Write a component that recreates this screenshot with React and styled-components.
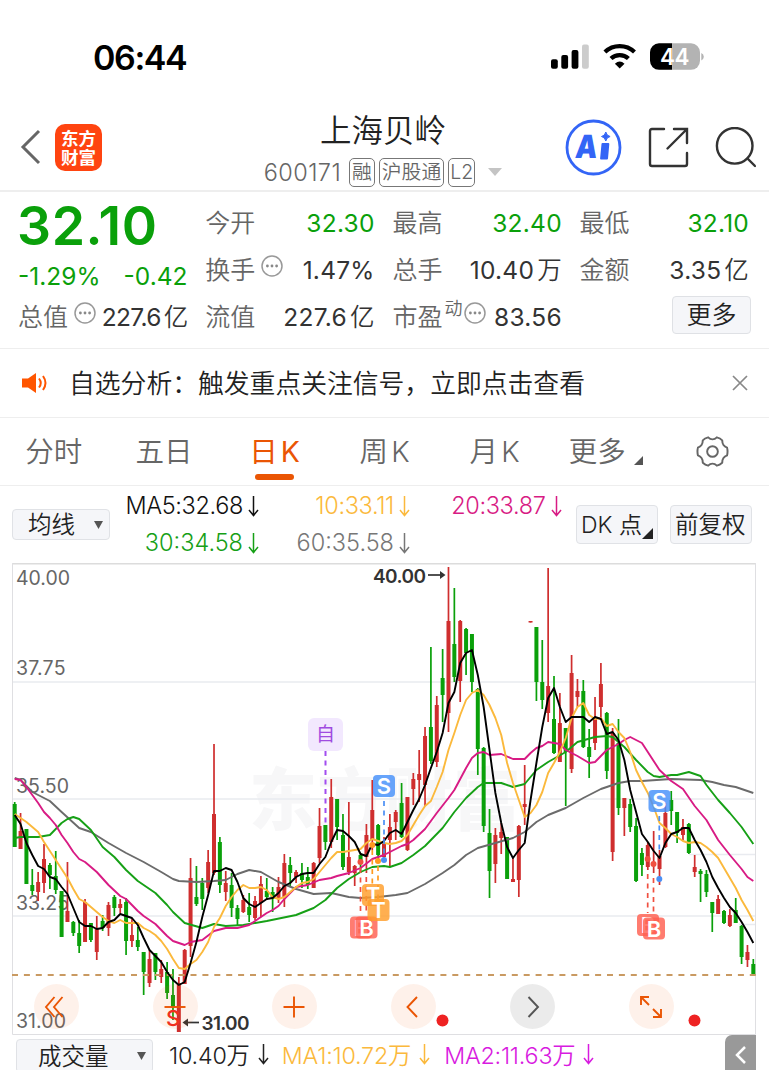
import React from 'react';
import styled, { createGlobalStyle } from 'styled-components';

const GlobalStyle = createGlobalStyle`
    * {
        box-sizing: border-box;
    }
    body {
        margin: 0;
        background: #fff;
        font-family: Inter, "Noto Sans CJK SC", sans-serif;
        color: #333;
    }
`;

const GREEN = '#0aa00a';
const RED = '#cf2e2e';
const ORANGE = '#ea5504';
const YELLOW = '#fbb93c';
const PINK = '#d81b84';
const GREY = '#6b6b6b';

const Page = styled.div`
    width: 769px;
    height: 1070px;
    overflow: hidden;
    display: flex;
    flex-direction: column;
    font-weight: 350;
`;

const StatusBar = styled.div`
    height: 104px;
    padding: 10px 65px 0 93px;
    display: flex;
    align-items: center;
    justify-content: space-between;
`;

const Clock = styled.span`
    font-size: 34px;
    font-weight: 600;
    letter-spacing: -1.4px;
    color: #000;
`;

const Header = styled.div`
    height: 88px;
    padding: 0 13px 0 20px;
    border-bottom: 2px solid #eee;
    display: grid;
    grid-template-columns: 1fr auto 1fr;
    align-items: center;
`;

const HeaderSide = styled.div`
    display: flex;
    align-items: center;
    justify-content: ${props => (props.$end ? 'flex-end' : 'flex-start')};
    gap: ${props => (props.$end ? '26px' : '14px')};
`;

const Logo = styled.div`
    width: 47px;
    height: 47px;
    border-radius: 10px;
    background: #ff4410;
    color: #fff;
    font-family: "Noto Sans CJK SC", sans-serif;
    font-size: 17.5px;
    font-weight: 700;
    line-height: 19px;
    text-align: center;
    padding-top: 4px;
`;

const TitleBlock = styled.div`
    text-align: center;
    padding: 5px 10px 0 0;
`;

const Title = styled.div`
    font-size: 31.5px;
    line-height: 38px;
    margin-bottom: 7px;
    color: #222;
`;

const CodeRow = styled.div`
    display: flex;
    align-items: center;
    justify-content: center;
    gap: 4px;
    height: 30px;
    font-size: 23.5px;
    color: #666;
    .code {
        margin-right: 4px;
        letter-spacing: 0.4px;
    }
    svg {
        margin-left: 9px;
    }
`;

const Badge = styled.span`
    height: 29px;
    padding: 0 ${props => (props.$latin ? '1px' : '2px')};
    border: 1.5px solid #777;
    border-radius: 5px;
    font-size: ${props => (props.$latin ? '19.5px' : '19.8px')};
    line-height: 26px;
`;

const Quotes = styled.div`
    height: 157px;
    padding: 7px 19px 0 19px;
    border-bottom: 1px solid #eee;
    display: grid;
    grid-template-columns: repeat(4, 168.5px);
    grid-template-rows: repeat(3, 47px);
    column-gap: 18.7px;
`;

const PriceCell = styled.div`
    grid-row: span 2;
    color: ${GREEN};
`;

const Price = styled.div`
    font-size: 53.5px;
    font-weight: 600;
    line-height: 54px;
    letter-spacing: 0.6px;
    margin-left: -2px;
`;

const Change = styled.div`
    display: flex;
    justify-content: space-between;
    font-size: 24.5px;
    font-weight: 400;
    line-height: 30px;
    margin: 8px 0 0 -1px;
`;

const Cell = styled.div`
    display: flex;
    align-items: center;
    justify-content: space-between;
    white-space: nowrap;
`;

const Label = styled.span`
    display: flex;
    align-items: center;
    margin: -4px 0 0 -1px;
    font-size: 25px;
    color: #666;
    svg {
        margin: 0 0 4px 6px;
    }
    sup {
        font-size: 18px;
        line-height: 18px;
        margin: 0 0 12px 2px;
        vertical-align: baseline;
    }
    sup + svg {
        margin-left: 2px;
    }
`;

const Value = styled.span`
    font-size: 24.5px;
    font-weight: 400;
    color: ${props => (props.$down ? GREEN : '#333')};
    letter-spacing: ${props => (props.$tight ? '-0.7px' : '0.25px')};
    margin-top: ${props => (props.$cjk ? '-2px' : '0')};
    i {
        font-style: normal;
        font-weight: 350;
        margin-left: 3px;
    }
`;

const MoreButton = styled.button`
    width: 79px;
    height: 38px;
    margin: -4px -2px 0 auto;
    padding: 0;
    border: 1.5px solid #dfe1e5;
    border-radius: 4px;
    background: #f5f6f9;
    font: inherit;
    font-size: 25px;
    line-height: 34px;
    color: #222;
`;

const Notice = styled.div`
    height: 69px;
    padding: 0 21px;
    border-bottom: 1px solid #eee;
    display: flex;
    align-items: center;
    font-size: 25.8px;
    color: #222;
    span {
        flex: 1;
        margin: -4px 0 0 21px;
    }
`;

const Tabs = styled.div`
    height: 68px;
    margin-left: -1px;
    border-bottom: 1px solid #eee;
    display: grid;
    grid-template-columns: 109.600px 111px 110px 110px 110px 108.500px 109px;
`;

const Tab = styled.div`
    display: flex;
    flex-direction: column;
    align-items: center;
    padding-top: 13px;
    font-size: 28.5px;
    line-height: 41px;
    color: ${props => (props.$active ? ORANGE : '#666')};
    font-weight: ${props => (props.$active ? 400 : 350)};
    &::after {
        content: '';
        width: 39px;
        height: 6px;
        margin-top: 2px;
        border-radius: 3px;
        background: ${props => (props.$active ? ORANGE : 'transparent')};
    }
    div {
        display: flex;
        align-items: center;
        gap: 3px;
    }
    .corner {
        margin: 18px -4px 0 5px;
    }
    .gear {
        margin-top: 4px;
    }
`;

const Indicators = styled.div`
    height: 77px;
    padding: 0 17px 0 12px;
    display: flex;
`;

const Select = styled.div`
    width: ${props => props.$width}px;
    height: ${props => props.$height}px;
    padding: 0 ${props => props.$right}px 0 ${props => props.$left}px;
    margin-top: ${props => props.$top}px;
    border: 1.5px solid #e0e2e6;
    border-radius: 4px;
    background: #f5f6f9;
    display: flex;
    flex: none;
    align-items: center;
    justify-content: space-between;
    font-size: ${props => props.$size || 23.5}px;
    color: #222;
    white-space: nowrap;
    span {
        margin-top: -3px;
    }
    svg {
        flex: none;
    }
    .corner {
        align-self: flex-end;
        margin: 0 0 4px -4px;
    }
    & + & {
        margin-left: 12px;
    }
`;

const Averages = styled.div`
    display: grid;
    grid-template-columns: 149px 151px 151.5px;
    grid-template-rows: 37px 37px;
    padding-top: 1px;
    margin-right: 14.5px;
`;

const Average = styled.div`
    display: flex;
    align-items: center;
    justify-content: flex-end;
    gap: 5px;
    font-size: 23.5px;
    letter-spacing: ${props => props.$spacing || '-0.35px'};
    white-space: nowrap;
    color: ${props => props.$color};
`;

const ChartWrap = styled.div`
    position: relative;
    width: 744px;
    height: 472px;
    margin-left: 12px;
    flex: none;
    > svg {
        display: block;
    }
`;

const Tools = styled.div`
    position: absolute;
    left: 21.5px;
    bottom: 6px;
    display: flex;
    gap: 74px;
`;

const Tool = styled.div`
    width: 45px;
    height: 45px;
    border-radius: 50%;
    display: flex;
    align-items: center;
    justify-content: center;
    background: ${props => (props.$muted ? 'rgba(0, 0, 0, 0.08)' : 'rgba(240, 100, 20, 0.09)')};
`;

const VolumeBar = styled.div`
    height: 35px;
    padding: 0 13px 0 16px;
    display: flex;
    align-items: flex-start;
`;

const VolumeText = styled.div`
    display: flex;
    align-items: center;
    gap: 8px;
    height: 40px;
    margin: -1px 0 0 ${props => props.$gap}px;
    font-size: 23.3px;
    letter-spacing: -0.2px;
    white-space: nowrap;
    color: ${props => props.$color};
`;

const Collapse = styled.div`
    width: 31px;
    height: 35px;
    margin-left: auto;
    border-radius: 7px 0 0 0;
    background: #999;
    display: flex;
    align-items: center;
    justify-content: center;
    padding-top: 4px;
`;

const DownArrow = () => (
    <svg width="11" height="22" viewBox="0 0 11 22" fill="none" stroke="currentColor" strokeWidth="1.5">
        <path d="M5.5 1v19M1 15l4.5 5.5L10 15" />
    </svg>
);

const Caret = ({ w = 10, h = 9, color = '#555' }) => (
    <svg width={w} height={h} viewBox="0 0 10 9" preserveAspectRatio="none"><path d="M0 0h10L5 9z" fill={color} /></svg>
);

const Corner = ({ size = 9, color = '#555' }) => (
    <svg className="corner" width={size} height={size} viewBox="0 0 10 10"><path d="M10 0v10H0z" fill={color} /></svg>
);

const InfoIcon = () => (
    <svg width="22" height="22" viewBox="0 0 22 22">
        <circle cx="11" cy="11" r="10" fill="none" stroke="#999" strokeWidth="1.5" />
        <circle cx="6.4" cy="11" r="1.4" fill="#888" />
        <circle cx="11" cy="11" r="1.4" fill="#888" />
        <circle cx="15.6" cy="11" r="1.4" fill="#888" />
    </svg>
);

const StatusIcons = () => (
    <svg width="154" height="30" viewBox="0 0 154 30">
        <rect x="1" y="17.300" width="6.800" height="9.500" rx="2" />
        <rect x="11.300" y="13" width="6.800" height="13.800" rx="2" />
        <rect x="21.600" y="8" width="6.800" height="18.800" rx="2" />
        <rect x="32" y="2.500" width="6.800" height="24.300" rx="2" fill="#ccc" />
        <path d="M54.900 10.100a21.500 21.500 0 0 1 29.600 0M61 16.600a12.500 12.500 0 0 1 17.400 0" fill="none" stroke="#000" strokeWidth="4.200" />
        <path d="M69.700 26.600l-4.800-4.900q4.800-4.600 9.600 0z" />
        <path d="M109 1.300h13.200v26.500H109a9 9 0 0 1-9-9v-8.500a9 9 0 0 1 9-9z" />
        <path d="M122.200 1.300H141a9 9 0 0 1 9 9v8.500a9 9 0 0 1-9 9h-18.800z" fill="#b3b3b3" />
        <path d="M151.300 11q2.500 1.300 2.500 3.700t-2.500 3.700z" fill="#b3b3b3" />
        <text x="124.700" y="23" textAnchor="middle" fontSize="22.500" fontWeight="600" fill="#fff" textLength="29.500">44</text>
    </svg>
);

const AiIcon = () => (
    <svg width="57" height="57" viewBox="0 0 57 57">
        <circle cx="28.500" cy="28.500" r="26.500" fill="none" stroke="#3365f6" strokeWidth="2.800" />
        <text x="9.500" y="39" fontSize="32" fontWeight="900" fill="#3365f6" textLength="22" lengthAdjust="spacingAndGlyphs" transform="skewX(-6) translate(4 0)">A</text>
        <path d="M36.500 25q0-1 1-1h5.800q1 0 1 1L43 39.500q0 1-1 1h-6q-1 0-.9-1z" fill="#3365f6" />
        <path d="M40.800 13q.8 3.800 4.300 4.500-3.500.8-4.300 4.500-.8-3.700-4.300-4.500 3.500-.7 4.300-4.500z" fill="#3365f6" stroke="#3365f6" />
    </svg>
);

const CANDLES = [
    'g 239 241 284 284', 'r 250 268 286 286', 'g 266 266 321 321', 'g 306 322 328 332', 'r 309 319 329 338',
    'r 281 296 320 330', 'g 300 302 312 326', 'g 288 313 327 331', 'g 328 328 374 374', 'r 299 348 359 359',
    'g 358 359 370 373', 'g 357 370 383 390', 'r 336 339 379 379', 'g 360 360 377 379', 'r 353 366 389 397',
    'g 352 358 365 368', 'r 339 342 365 373', 'g 332 334 345 353', 'r 336 341 345 350', 'g 335 339 378 392',
    'r 356 372 378 384', 'g 364 377 384 388', 'g 389 389 409 432', 'r 387 396 420 424', 'g 390 390 409 417',
    'r 397 406 414 420', 'g 399 409 430 436', 'g 406 432 444 457', 'r 414 420 469 469', 'r 386 387 421 421',
    'r 295 315 383 394', 'g 303 334 341 343', 'g 315 320 336 347', 'r 287 299 325 330', 'r 181 251 310 312',
    'g 274 279 322 330', 'r 308 320 329 338', 'g 310 322 345 354', 'g 342 345 356 363', 'r 332 337 349 350',
    'g 330 344 352 359', 'r 333 338 355 357', 'r 313 321 340 354', 'g 315 328 334 337', 'g 324 329 336 349',
    'r 314 324 336 340', 'r 291 300 334 344', 'g 294 302 310 323', 'r 307 309 314 320', 'g 300 310 317 325',
    'g 304 314 322 326', 'r 299 300 325 325', 'r 245 263 295 300', 'g 262 262 279 287', 'r 216 234 279 285',
    'g 236 236 264 277', 'g 251 272 304 307', 'r 239 294 309 312', 'r 302 303 310 323', 'g 290 292 299 310',
    'r 261 272 294 310', 'r 217 247 277 287', 'g 261 262 292 299', 'r 274 280 294 298', 'r 251 264 277 303',
    'r 247 249 259 277', 'g 220 240 274 275', 'r 234 234 287 288', 'r 210 216 226 242', 'r 187 211 217 239',
    'r 164 173 222 243', 'g 84 164 198 201', 'r 133 142 199 204', 'g 86 115 132 159', 'r 4 58 150 169',
    'g 25 81 114 119', 'r 57 58 118 139', 'g 65 66 90 112', 'g 71 71 119 129', 'g 125 126 186 212',
    'g 184 185 263 269', 'g 246 270 308 335', 'r 265 272 301 320', 'r 260 269 275 291', 'g 274 274 316 316',
    'r 294 316 319 319', 'r 262 263 317 334', 'r 202 241 244 262', 'r 58 58 59.5 59.5', 'g 64 64 119 138',
    'g 77 119 137 146', 'r 5 123 150 159', 'g 113 156 190 191', 'r 130 160 199 199', 'g 165 165 189 243',
    'r 92 110 206 210', 'r 116 128 134 144', 'g 117 128 184 185', 'g 166 184 194 215', 'r 134 155 180 187',
    'r 100 121 144 157', 'g 149 150 208 216', 'r 165 170 289 298', 'g 156 180 245 252', 'r 235 235 245 273',
    'g 236 241 264 269', 'g 255 263 318 319', 'g 285 290 302 313', 'r 279 282 304 307', 'r 268 299 303 310',
    'r 287 293 306 322', 'r 240 250 284 285', 'g 228 237 248 262', 'g 249 249 270 280', 'r 256 264 272 277',
    'g 260 261 290 291', 'r 292 304 309 314', 'g 306 308 311 339', 'g 307 311 329 334', 'g 339 339 350 369',
    'r 332 336 351 351', 'g 347 348 360 361', 'r 346 352 363 364', 'g 335 347 360 360', 'g 362 363 394 401',
    'r 382 389 397 404', 'g 396 401 412 412',
].map(row => {
    const [dir, ...ys] = row.split(' ');
    return [dir, ...ys.map(Number)];
});

const MA5 = [
    252, 261, 280, 292, 303, 306, 314, 316, 324, 331, 345, 359, 363, 363, 366, 365, 359, 357, 351, 353, 355,
    362, 375, 387, 393, 399, 409, 417, 422, 419, 400, 379, 354, 332, 308, 308, 305, 307, 319, 335, 341, 344,
    340, 336, 335, 330, 323, 320, 314, 311, 310, 310, 301, 294, 279, 267, 268, 273, 279, 291, 293, 281, 282,
    278, 270, 267, 271, 259, 247, 236, 222, 205, 189, 170, 140, 129, 100, 90, 87, 112, 144, 187, 230, 260,
    284, 295, 287, 280, 237, 200, 164, 135, 125, 144, 159, 154, 154, 154, 159, 154, 156, 171, 169, 177, 197,
    227, 249, 271, 279, 288, 295, 280, 271, 269, 265, 265, 277, 287, 299, 314, 325, 335, 344, 350, 359, 369, 380,
].map((y, i) => [i, y]);

const MA10 = [
    251, 255, 259, 264, 269, 279, 288, 297, 306, 315, 326, 336, 339, 344, 349, 354, 358, 360, 357, 360, 360,
    360, 365, 368, 372, 378, 386, 396, 405, 406, 401, 397, 389, 379, 364, 355, 343, 334, 327, 322, 325, 325,
    324, 327, 334, 336, 334, 329, 324, 320, 319, 316, 309, 302, 295, 289, 289, 288, 287, 286, 280, 276, 278,
    280, 281, 280, 278, 272, 262, 252, 243, 238, 224, 209, 187, 170, 152, 137, 130, 127, 132, 142, 155, 172,
    200, 220, 237, 254, 250, 242, 229, 210, 200, 189, 175, 155, 144, 140, 152, 156, 155, 163, 161, 169, 175,
    189, 207, 219, 230, 244, 260, 265, 271, 274, 278, 280, 279, 280, 284, 289, 295, 305, 315, 325, 337, 347, 358,
].map((y, i) => [i, y]);

const MA20 = [
    [0, 216], [1, 217], [2, 224], [3, 232], [4, 240], [5, 249], [6, 255], [7, 262], [8, 272], [9, 280], [10, 289],
    [11, 296], [12, 299], [14, 309], [16, 322], [18, 333], [19, 336], [21, 348], [22, 353], [24, 361], [26, 373],
    [27, 378], [28, 380], [29, 382], [30, 379], [32, 377], [34, 368], [36, 365], [38, 365], [40, 362], [41, 358],
    [43, 350], [44, 347], [45, 343], [46, 336], [48, 324], [50, 322], [52, 317], [54, 315], [55, 313], [57, 310],
    [59, 305], [61, 296], [63, 292], [64, 289], [66, 283], [67, 281], [68, 277], [70, 266], [72, 250], [74, 235],
    [75, 227], [77, 205], [78, 195], [79, 190], [80, 189], [81, 192], [83, 191], [85, 196], [87, 196], [88, 190],
    [89, 185], [90, 183], [91, 179], [93, 181], [94, 187], [96, 193], [98, 200], [99, 199], [101, 187], [103, 181],
    [104, 177], [105, 174], [107, 180], [108, 189], [110, 207], [112, 218], [114, 226], [116, 243], [118, 257],
    [120, 277], [122, 292], [124, 306], [125, 314], [126, 318],
];

const MA30 = [
    [0, 275], [1, 274], [4, 274], [6, 272], [8, 260], [9, 256], [10, 254], [11, 256], [13, 267], [15, 284], [17, 294],
    [19, 307], [21, 318], [24, 330], [26, 342], [27, 349], [29, 360], [32, 365], [34, 361], [36, 363], [39, 362],
    [40, 361], [43, 358], [48, 352], [51, 345], [53, 337], [55, 325], [57, 316], [59, 309], [61, 304], [63, 303],
    [64, 304], [66, 300], [68, 292], [70, 283], [71, 277], [73, 265], [75, 249], [77, 235], [79, 224], [80, 220],
    [83, 220], [85, 224], [87, 221], [88, 214], [89, 207], [91, 199], [94, 189], [96, 179], [99, 174], [101, 173],
    [102, 174], [103, 179], [104, 184], [106, 197], [108, 209], [109, 213], [110, 214], [112, 212], [113, 212],
    [115, 209], [117, 213], [118, 222], [120, 237], [122, 250], [124, 264], [126, 281],
];

const MA60 = [
    [0, 215], [1, 217], [3, 229], [6, 238], [8, 249], [11, 265], [13, 269], [16, 280], [19, 290], [22, 299], [25, 309],
    [27, 316], [28, 318], [31, 319], [34, 318], [36, 317], [38, 311], [40, 307], [42, 309], [45, 319], [48, 326],
    [51, 331], [54, 330], [57, 334], [59, 335], [62, 334], [65, 332], [67, 330], [70, 321], [73, 310], [75, 302],
    [77, 292], [79, 285], [82, 280], [85, 275], [87, 269], [89, 259], [91, 252], [94, 245], [97, 235], [100, 226],
    [103, 220], [105, 218], [107, 218], [112, 216], [117, 217], [119, 219], [121, 222], [123, 224], [126, 230],
];

const LINES = [
    { color: GREY, points: MA60 },
    { color: '#16a016', points: MA30 },
    { color: PINK, points: MA20 },
    { color: YELLOW, points: MA10 },
    { color: '#000', points: MA5 },
];

const AXIS = [
    { text: '40.00', y: 21.5, w: 54 },
    { text: '37.75', y: 112, w: 49.5 },
    { text: '35.50', y: 230, w: 53 },
    { text: '33.25', y: 346.5, w: 53 },
    { text: '31.00', y: 465, w: 50 },
];

const xOf = i => 2.7 + i * 5.862;

const Marker = ({ x, y, letter, color }) => (
    <g>
        <rect x={x} y={y} width="22" height="22" rx="4" fill={color} fillOpacity="0.82" />
        <text x={x + 11} y={y + 19} textAnchor="middle" fontSize="22" fontWeight="600" fill="#fff">{letter}</text>
    </g>
);

const Guide = ({ x, from, to, color, dot, width = 1.700 }) => (
    <g>
        <path d={`M${x} ${from}V${to}`} stroke={color} strokeWidth={width} strokeDasharray="5 4.500" />
        {dot && <circle cx={x} cy={dot} r="3" fill={color} />}
    </g>
);

const Chart = () => (
    <svg width="744" height="472" viewBox="0 0 744 472">
        <g fontSize="68" fontWeight="900" fill="#f7f7f8" fontFamily="Noto Sans CJK SC">
            <text x="237" y="262" textLength="272">东方财富</text>
        </g>
        <g stroke="#e9ebf0" strokeWidth="1.500">
            <path d="M0 119H744M0 236H744M0 353H744" />
            <path d="M677 291.500H744M727 361.500H744" />
        </g>
        <path d="M0 .75H744" stroke="#dcdcdc" strokeWidth="1.500" />
        <path d="M.5 0V471.500H743.500V0" fill="none" stroke="#dfdfe2" />
        <g fontSize="19.500" fontWeight="400" fill="#666">
            {AXIS.map(a => <text key={a.text} x="4" y={a.y} textLength={a.w}>{a.text}</text>)}
        </g>
        {CANDLES.map(([dir, high, top, bottom, low], i) => (
            <g key={i} fill={dir === 'g' ? GREEN : RED}>
                <rect x={xOf(i) - 0.850} y={high} width="1.700" height={low - high} />
                <rect x={xOf(i) - 2} y={top} width="4" height={bottom - top} />
            </g>
        ))}
        <path d="M0 412H744" stroke="#c99a62" strokeWidth="2" strokeDasharray="6 5.900" />
        {LINES.map(l => (
            <polyline
                key={l.color}
                points={l.points.map(([i, y]) => `${xOf(i)},${y}`).join(' ')}
                fill="none"
                stroke={l.color}
                strokeWidth="1.900"
                strokeLinejoin="round"
            />
        ))}

        <Guide x={313.500} from={188} to={262} color="#a24df0" width={2} />
        <rect x="296" y="155" width="35" height="33" rx="6" fill="#f2e8fe" />
        <text x="313.500" y="178" textAnchor="middle" fontSize="19" fontWeight="400" fill="#a04be0">自</text>

        <Guide x={372} from={238} to={292} color="#4a8ff5" dot={297} />
        <Guide x={647.300} from={253} to={290} color="#4a8ff5" dot={316} />
        <Guide x={348.500} from={305} to={352} color="#f05040" dot={299} />
        <Guide x={354.300} from={314} to={352} color="#f05040" />
        <Guide x={360.300} from={287} to={321} color="#ff9a20" dot={282} />
        <Guide x={366} from={303} to={336} color="#ff9a20" dot={298} />
        <Guide x={635.700} from={311} to={350} color="#f05040" dot={296} />
        <Guide x={641.500} from={315} to={353} color="#f05040" dot={301} />
        <Marker x={361} y={212} letter="S" color="#4690fa" />
        <Marker x={636.500} y={227} letter="S" color="#4690fa" />
        <Marker x={338} y={353.500} letter="B" color="#ff5f50" />
        <Marker x={343.500} y={353.500} letter="B" color="#ff5f50" />
        <Marker x={350} y={321} letter="T" color="#ff9d2a" />
        <Marker x={355.500} y={336} letter="T" color="#ff9d2a" />
        <Marker x={625} y={351} letter="B" color="#ff5f50" />
        <Marker x={631} y={354.500} letter="B" color="#ff5f50" />

        <g fontSize="19" fontWeight="600" fill="#333">
            <text x="361" y="19.500" textLength="53">40.00</text>
            <text x="189.500" y="466.500" textLength="48">31.00</text>
        </g>
        <g stroke="#333" strokeWidth="1.700" fill="#333">
            <path d="M416 12h13" />
            <path d="M428 8l5.500 4-5.500 4z" stroke="none" />
            <path d="M175 459.500h12" />
            <path d="M176 455.500l-5.500 4 5.500 4z" stroke="none" />
        </g>
        <text x="161" y="463" textAnchor="middle" fontSize="22" fontWeight="500" fill="#f02a20">S</text>
        <circle cx="430.500" cy="457.500" r="6" fill="#ee2222" />
        <circle cx="682.500" cy="457.500" r="6" fill="#ee2222" />
    </svg>
);

const TOOLS = [
    'M10.500 2L2 12l8.500 10M18.500 2L10 12l8.500 10',
    'M1.500 12h21',
    'M1.500 12h21M12 1.500v21',
    'M16 2L6.500 12l9.500 10',
    'M8.500 2L18 12l-9.500 10',
    'M2 10V2h8M2 2l8 8M22 14v8h-8M22 22l-8-8',
];

const App = () => {
    return (
        <Page>
            <GlobalStyle />
            <StatusBar>
                <Clock>06:44</Clock>
                <StatusIcons />
            </StatusBar>

            <Header>
                <HeaderSide>
                    <svg width="21" height="36" viewBox="0 0 21 36" fill="none" stroke="#666" strokeWidth="3">
                        <path d="M19 2L3 18l16 16" />
                    </svg>
                    <Logo>东方<br />财富</Logo>
                </HeaderSide>
                <TitleBlock>
                    <Title>上海贝岭</Title>
                    <CodeRow>
                        <span className="code">600171</span>
                        <Badge>融</Badge>
                        <Badge>沪股通</Badge>
                        <Badge $latin>L2</Badge>
                        <Caret w={14} h={8} color="#c4c4c4" />
                    </CodeRow>
                </TitleBlock>
                <HeaderSide $end>
                    <AiIcon />
                    <svg width="41" height="41" viewBox="0 0 41 41" fill="none" stroke="#333" strokeWidth="2.400" strokeLinecap="round">
                        <path d="M16 2H4Q2 2 2 4v33q0 2 2 2h33q2 0 2-2V26M26 2h13v14M39 2L19.500 21.500" />
                    </svg>
                    <svg width="41" height="41" viewBox="0 0 41 41" fill="none" stroke="#333" strokeWidth="2.400" strokeLinecap="round">
                        <circle cx="19.700" cy="18.800" r="17.800" />
                        <path d="M32.500 31.500l7.500 7.500" />
                    </svg>
                </HeaderSide>
            </Header>

            <Quotes>
                <PriceCell>
                    <Price>32.10</Price>
                    <Change><span>-1.29%</span><span>-0.42</span></Change>
                </PriceCell>
                <Cell><Label>今开</Label><Value $down>32.30</Value></Cell>
                <Cell><Label>最高</Label><Value $down>32.40</Value></Cell>
                <Cell><Label>最低</Label><Value $down>32.10</Value></Cell>
                <Cell><Label>换手<InfoIcon /></Label><Value>1.47%</Value></Cell>
                <Cell><Label>总手</Label><Value $cjk>10.40<i>万</i></Value></Cell>
                <Cell><Label>金额</Label><Value $cjk>3.35<i>亿</i></Value></Cell>
                <Cell><Label>总值<InfoIcon /></Label><Value $tight $cjk>227.6<i>亿</i></Value></Cell>
                <Cell><Label>流值</Label><Value $cjk>227.6<i>亿</i></Value></Cell>
                <Cell><Label>市盈<sup>动</sup><InfoIcon /></Label><Value>83.56</Value></Cell>
                <Cell><MoreButton>更多</MoreButton></Cell>
            </Quotes>

            <Notice>
                <svg width="27" height="22" viewBox="0 0 27 22">
                    <path d="M1 6.500h6L15 1v20l-8-5.500H1z" fill="#ff5500" />
                    <path d="M18 6.500q3.500 4.500 0 9M22 4q5 7 0 14" fill="none" stroke="#ff5500" strokeWidth="2" />
                </svg>
                <span>自选分析：触发重点关注信号，立即点击查看</span>
                <svg width="16" height="16" viewBox="0 0 16 16" stroke="#888" strokeWidth="1.700">
                    <path d="M1 1l14 14M15 1L1 15" />
                </svg>
            </Notice>

            <Tabs>
                <Tab>分时</Tab>
                <Tab>五日</Tab>
                <Tab $active><div>日<span>K</span></div></Tab>
                <Tab><div>周<span>K</span></div></Tab>
                <Tab><div>月<span>K</span></div></Tab>
                <Tab><div>更多<Corner /></div></Tab>
                <Tab>
                    <svg className="gear" width="33" height="33" viewBox="0 0 34 34" fill="none" stroke="#666" strokeWidth="2">
                        <path d="M12.500 2.500q2 2 4.500 2t4.500-2q3.500 1 5.500 3 0 3 1.300 4.800T32 13q1 4 0 8-2.400.8-3.700 2.700T27 28.500q-2.500 2.200-5.500 3-2-2-4.500-2t-4.500 2q-3-.8-5.500-3 0-3-1.300-4.800T2 21q-1-4 0-8 2.400-.8 3.700-2.700T7 5.500q2-2 5.500-3z" />
                        <circle cx="17" cy="17" r="5.500" />
                    </svg>
                </Tab>
            </Tabs>

            <Indicators>
                <Select $width={98} $height={31} $left={15} $right={6} $top={23}>
                    <span>均线</span><Caret w={9} h={8} />
                </Select>
                <Averages>
                    <Average $color="#111">MA5:32.68<DownArrow /></Average>
                    <Average $color={YELLOW}>10:33.11<DownArrow /></Average>
                    <Average $color={PINK}>20:33.87<DownArrow /></Average>
                    <Average $color="#16a016" $spacing="0">30:34.58<DownArrow /></Average>
                    <Average $color="#777" $spacing="0">60:35.58<DownArrow /></Average>
                </Averages>
                <Select $width={82} $height={39} $left={4} $right={4} $top={19} $size={23}>
                    <span>DK 点</span><Corner size={11} color="#222" />
                </Select>
                <Select $width={82} $height={39} $left={4} $right={2} $top={19}>
                    <span>前复权</span>
                </Select>
            </Indicators>

            <ChartWrap>
                <Chart />
                <Tools>
                    {TOOLS.map((d, i) => (
                        <Tool key={d} $muted={i === 4}>
                            <svg width="24" height="24" viewBox="0 0 24 24" fill="none" stroke={i === 4 ? '#555' : ORANGE} strokeWidth="1.900">
                                <path d={d} />
                            </svg>
                        </Tool>
                    ))}
                </Tools>
            </ChartWrap>

            <VolumeBar>
                <Select $width={137} $height={34} $left={21} $right={6} $top={4}>
                    <span>成交量</span><Caret w={9} h={8} />
                </Select>
                <VolumeText $gap={16} $color="#222">10.40万<DownArrow /></VolumeText>
                <VolumeText $gap={13} $color={YELLOW}>MA1:10.72万<DownArrow /></VolumeText>
                <VolumeText $gap={14} $color="#d81be0">MA2:11.63万<DownArrow /></VolumeText>
                <Collapse>
                    <svg width="12" height="18" viewBox="0 0 12 18" fill="none" stroke="#fff" strokeWidth="2.500">
                        <path d="M10 1L2 9l8 8" />
                    </svg>
                </Collapse>
            </VolumeBar>
        </Page>
    );
};

export default App;
